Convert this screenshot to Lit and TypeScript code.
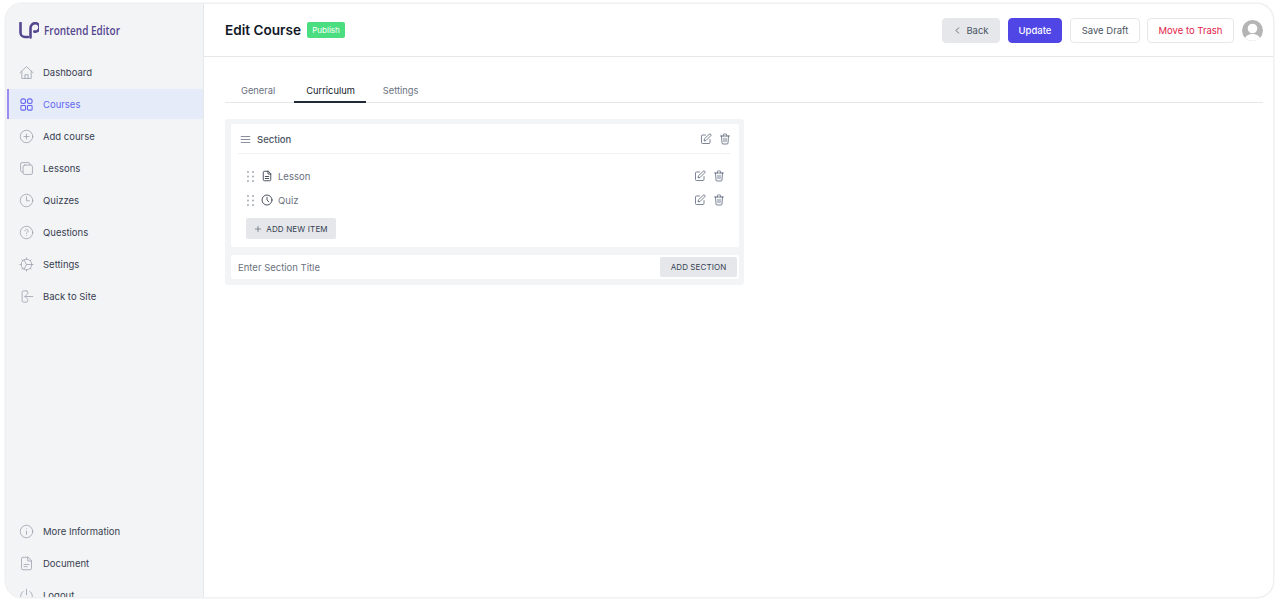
import { LitElement, html, css, svg } from "lit";
import { customElement } from "lit/decorators.js";

const ic = (body: unknown, cls = "") => html`<svg class="ic ${cls}" viewBox="0 0 24 24" fill="none" stroke="currentColor" stroke-width="1.6" stroke-linecap="round" stroke-linejoin="round">${body}</svg>`;

const icons: Record<string, unknown> = {
  home: svg`<path d="M1.500 12.500 12 2.500l10.500 10"/><path d="M4.500 10v11.500h15V10"/><path d="M9.500 21.500v-6h5v6"/>`,
  grid: svg`<rect x="3" y="3" width="7.500" height="7.500" rx="3.200"/><rect x="13.500" y="3" width="7.500" height="7.500" rx="3.200"/><rect x="3" y="13.500" width="7.500" height="7.500" rx="1.500"/><rect x="13.500" y="13.500" width="7.500" height="7.500" rx="1.500"/>`,
  plus: svg`<circle cx="12" cy="12" r="10"/><path d="M12 8v8M8 12h8"/>`,
  copy: svg`<path d="M6 17.500H5a2.500 2.500 0 0 1-2.500-2.500V5A2.500 2.500 0 0 1 5 2.500h10A2.500 2.500 0 0 1 17.500 5v1"/><rect x="6.500" y="6.500" width="15" height="15" rx="2.500"/>`,
  clock: svg`<circle cx="12" cy="12" r="10"/><path d="M12 6v6.500h4.500"/>`,
  help: svg`<circle cx="12" cy="12" r="10"/><path d="M9.500 9.500a2.500 2.500 0 1 1 3.800 2.100c-.8.500-1.300 1-1.300 2"/><path d="M12 17h.01"/>`,
  gear: svg`<circle cx="12" cy="12" r="8.500"/><path d="M12 1.500v2M12 20.500v2M1.500 12h2M20.500 12h2M4.500 4.500l1.500 1.500M18 18l1.500 1.500M4.500 19.500 6 18M18 6l1.500-1.500" stroke-dasharray="2 1"/><path d="M8 4.500 12 12h8M12 12l-4 7.500"/>`,
  back: svg`<path d="M12 3H7a2 2 0 0 0-2 2v14a2 2 0 0 0 2 2h5a2 2 0 0 0 2-2v-2M14 7V5a2 2 0 0 0-2-2"/><path d="M22 12H9.500M13 8.500 9.500 12l3.500 3.500"/>`,
  info: svg`<circle cx="12" cy="12" r="10"/><path d="M12 11.500v5M12 7.500h.01"/>`,
  doc: svg`<path d="M14 2H6.500A2.500 2.500 0 0 0 4 4.500v15A2.500 2.500 0 0 0 6.500 22h11a2.500 2.500 0 0 0 2.500-2.500V8z"/><path d="M14 2v6h6M8 13.500h8M8 17h5"/>`,
  power: svg`<path d="M12 2v9"/><path d="M6.500 5.500a9.500 9.500 0 1 0 11 0"/>`,
  edit: svg`<path d="M11 4H5a2 2 0 0 0-2 2v13a2 2 0 0 0 2 2h13a2 2 0 0 0 2-2v-6"/><path d="M18.500 2.500a2.100 2.100 0 0 1 3 3L12 15l-4 1 1-4z"/>`,
  trash: svg`<path d="M3 6h18"/><path d="M8.500 6V4a2 2 0 0 1 2-2h3a2 2 0 0 1 2 2v2"/><path d="M5 6l1 14a2 2 0 0 0 2 2h8a2 2 0 0 0 2-2l1-14"/><path d="M10 10.500v7M14 10.500v7"/>`,
  menu: svg`<path d="M2.500 5.500h19M2.500 12h19M2.500 18.500h19"/>`,
  lessonDoc: svg`<path d="M14 2.500H7A2.500 2.500 0 0 0 4.500 5v14A2.500 2.500 0 0 0 7 21.500h10a2.500 2.500 0 0 0 2.500-2.500V8z"/><path d="M14 2.500V8h5.500M8.500 13h7M8.500 17h7"/>`,
  quizClock: svg`<circle cx="12" cy="12" r="10"/><path d="M12 6.500V12l3.500 3.500"/>`,
  add: svg`<path d="M12 4v16M4 12h16"/>`,
  chev: svg`<path d="M15 5l-7 7 7 7"/>`,
};

const dots = html`<svg class="dots" viewBox="0 0 7 11"><g fill="#9ca3af"><circle cx="1" cy="1" r=".9"/><circle cx="6" cy="1" r=".9"/><circle cx="1" cy="5.500" r=".9"/><circle cx="6" cy="5.500" r=".9"/><circle cx="1" cy="10" r=".9"/><circle cx="6" cy="10" r=".9"/></g></svg>`;

@customElement("app-root")
export class AppRoot extends LitElement {
  static styles = css`
    :host { display: block; height: 601px; background: #fff; font-family: Inter, "Liberation Sans", sans-serif; padding: 4px 7px 4px 6px; box-sizing: border-box; overflow: hidden; }
    * { box-sizing: border-box; }
    .frame { display: flex; height: 593px; border-radius: 16px; overflow: hidden; background: #fff; box-shadow: 0 0 0 1.500px #eff0f2; }
    aside { width: 198px; flex: none; background: #f3f4f6; border-right: 1px solid #e5e7eb; overflow: hidden; padding-left: 1px; }
    .logo { display: flex; align-items: center; gap: 5px; height: 51px; padding: 0 0 0 12px; color: #54468f; }
    .logo svg { width: 20px; height: 17px; flex: none; margin-top: 2px; }
    .logo span { font-family: "Open Sans", sans-serif; font-size: 12.500px; font-weight: 600; display: inline-block; width: 75px; transform: scaleX(.8); transform-origin: left; white-space: nowrap; margin-top: 2px; }
    .nav { display: flex; flex-direction: column; padding-top: 1px; }
    .item { height: 32px; display: flex; align-items: center; gap: 9px; padding-left: 10px; font-size: 9.500px; color: #374151; border-left: 2px solid transparent; }
    .item.active { height: 30px; margin: 1px 0; background: #e6ebfa; border-left-color: #9a8cf0; color: #6366f1; }
    .item .ic { width: 15px; height: 15px; color: #9ca3af; stroke-width: 1.300; }
    .item.active .ic { color: #6366f1; stroke-width: 1.700; }
    .bottom { margin-top: 202px; }
    main { flex: 1; min-width: 0; display: flex; flex-direction: column; }
    header { height: 53px; border-bottom: 1px solid #e5e7eb; display: flex; align-items: center; padding: 0 10px 0 21px; }
    h1 { margin: 0 0 1px; font-size: 13.600px; font-weight: 600; color: #111827; }
    .badge { margin: 0 0 1px 6px; height: 16px; width: 38px; border-radius: 2px; background: #4ade80; color: #fff; font-size: 8px; display: flex; align-items: center; justify-content: center; }
    .actions { margin-left: auto; display: flex; align-items: center; }
    button { font-family: inherit; font-size: 9.500px; height: 25px; border-radius: 4px; border: 1px solid #e5e7eb; background: #fff; color: #4b5563; display: flex; align-items: center; justify-content: center; padding: 0; }
    .b-back { width: 58px; background: #e5e7eb; color: #4b5563; gap: 4px; margin-right: 8px; }
    .b-back .ic { width: 9px; height: 9px; stroke-width: 2.200; }
    .b-up { width: 54px; background: #4f46e5; border-color: #4f46e5; color: #fff; margin-right: 8px; font-weight: 500; }
    .b-draft { width: 70px; margin-right: 7px; }
    .b-trash { width: 87px; color: #e11d48; margin-right: 8px; }
    .avatar { width: 21px; height: 21px; border-radius: 50%; background: #b5b5b5; overflow: hidden; }
    .avatar svg { display: block; width: 21px; height: 21px; }
    .content { padding: 20px 10px 0 21px; }
    .tabs { display: flex; gap: 5px; height: 26px; border-bottom: 1px solid #e5e7eb; padding-left: 4px; }
    .tab { height: 26px; padding: 0 14px 0 12px; font-size: 9.300px; color: #6b7280; display: flex; align-items: center; }
    .tab.on { color: #111827; border-bottom: 2px solid #1f2937; padding: 2px 11px 0 12px; }
    .box { width: 519px; margin-top: 16px; background: #f3f4f6; border-radius: 3px; padding: 5px 5px 6px 6px; }
    .card { background: #fff; border-radius: 2px; height: 123px; padding: 0 8px 0 7px; }
    .sec { height: 30px; padding: 1px 0 0 2px; border-bottom: 1px solid #f0f1f3; display: flex; align-items: center; font-size: 9.500px; font-weight: 500; color: #4b5563; }
    .sec .ic { width: 12px; height: 12px; color: #5b6678; }
    .sec .m { margin-right: 6px; width: 11px; height: 11px; }
    .tools { margin-left: auto; display: flex; gap: 7px; }
    .row { height: 24px; display: flex; align-items: center; padding: 0 6px 0 9px; font-size: 9.500px; color: #6b7280; }
    .row .tools .ic { width: 12px; height: 12px; color: #5b6678; }
    .rows { padding-top: 10px; }
    .dots { width: 7px; height: 11px; margin-right: 7px; }
    .row .t { width: 12px; height: 12px; color: #1f2937; margin-right: 5px; }
    .add { margin: 6px 0 0 8px; width: 90px; height: 21px; background: #e5e7eb; border: none; border-radius: 2px; font-size: 8px; font-weight: 400; gap: 4px; color: #374151; letter-spacing: .15px; }
    .add .ic { width: 8px; height: 8px; color: #374151; }
    .inp { margin-top: 8px; height: 24px; background: #fff; border-radius: 2px; display: flex; align-items: center; justify-content: space-between; padding: 0 2px 0 7px; font-size: 9.500px; color: #6b7280; }
    .addsec { width: 77px; height: 20px; background: #e5e7eb; border: none; border-radius: 2px; font-size: 8px; font-weight: 400; color: #374151; letter-spacing: .1px; }
  `;

  private item(icon: string, label: string, active = false) {
    return html`<div class="item ${active ? "active" : ""}">${ic(icons[icon])}<span>${label}</span></div>`;
  }

  private tools() {
    return html`<div class="tools">${ic(icons.edit)}${ic(icons.trash)}</div>`;
  }

  render() {
    return html`<div class="frame">
      <aside>
        <div class="logo">
          <svg viewBox="0 0 20 17" fill="none" stroke="#54468f" stroke-width="2.600" stroke-linecap="round" stroke-linejoin="round"><path d="M1.500 1V10.500a4.500 4.500 0 0 0 4.500 4.500h3"/><path d="M11.500 15.500V6a4.800 4.800 0 0 1 4.800-4.800 3.700 3.700 0 0 1 0 8.400h-1"/></svg>
          <span>Frontend Editor</span>
        </div>
        <div class="nav">
          ${this.item("home", "Dashboard")}
          ${this.item("grid", "Courses", true)}
          ${this.item("plus", "Add course")}
          ${this.item("copy", "Lessons")}
          ${this.item("clock", "Quizzes")}
          ${this.item("help", "Questions")}
          ${this.item("gear", "Settings")}
          ${this.item("back", "Back to Site")}
        </div>
        <div class="nav bottom">
          ${this.item("info", "More Information")}
          ${this.item("doc", "Document")}
          ${this.item("power", "Logout")}
        </div>
      </aside>
      <main>
        <header>
          <h1>Edit Course</h1>
          <div class="badge">Publish</div>
          <div class="actions">
            <button class="b-back">${ic(icons.chev)}Back</button>
            <button class="b-up">Update</button>
            <button class="b-draft">Save Draft</button>
            <button class="b-trash">Move to Trash</button>
            <div class="avatar"><svg viewBox="0 0 21 21"><circle cx="10.500" cy="8.500" r="4.800" fill="#fff"/><path d="M2 21c1-5 4-7 8.500-7s7.500 2 8.500 7z" fill="#fff"/></svg></div>
          </div>
        </header>
        <div class="content">
          <div class="tabs">
            <div class="tab">General</div>
            <div class="tab on">Curriculum</div>
            <div class="tab">Settings</div>
          </div>
          <div class="box">
            <div class="card">
              <div class="sec">${ic(icons.menu, "m")}<span>Section</span>${this.tools()}</div>
              <div class="rows">
                <div class="row">${dots}${ic(icons.lessonDoc, "t")}<span>Lesson</span>${this.tools()}</div>
                <div class="row">${dots}${ic(icons.quizClock, "t")}<span>Quiz</span>${this.tools()}</div>
              </div>
              <button class="add">${ic(icons.add)}ADD NEW ITEM</button>
            </div>
            <div class="inp"><span>Enter Section Title</span><button class="addsec">ADD SECTION</button></div>
          </div>
        </div>
      </main>
    </div>`;
  }
}
